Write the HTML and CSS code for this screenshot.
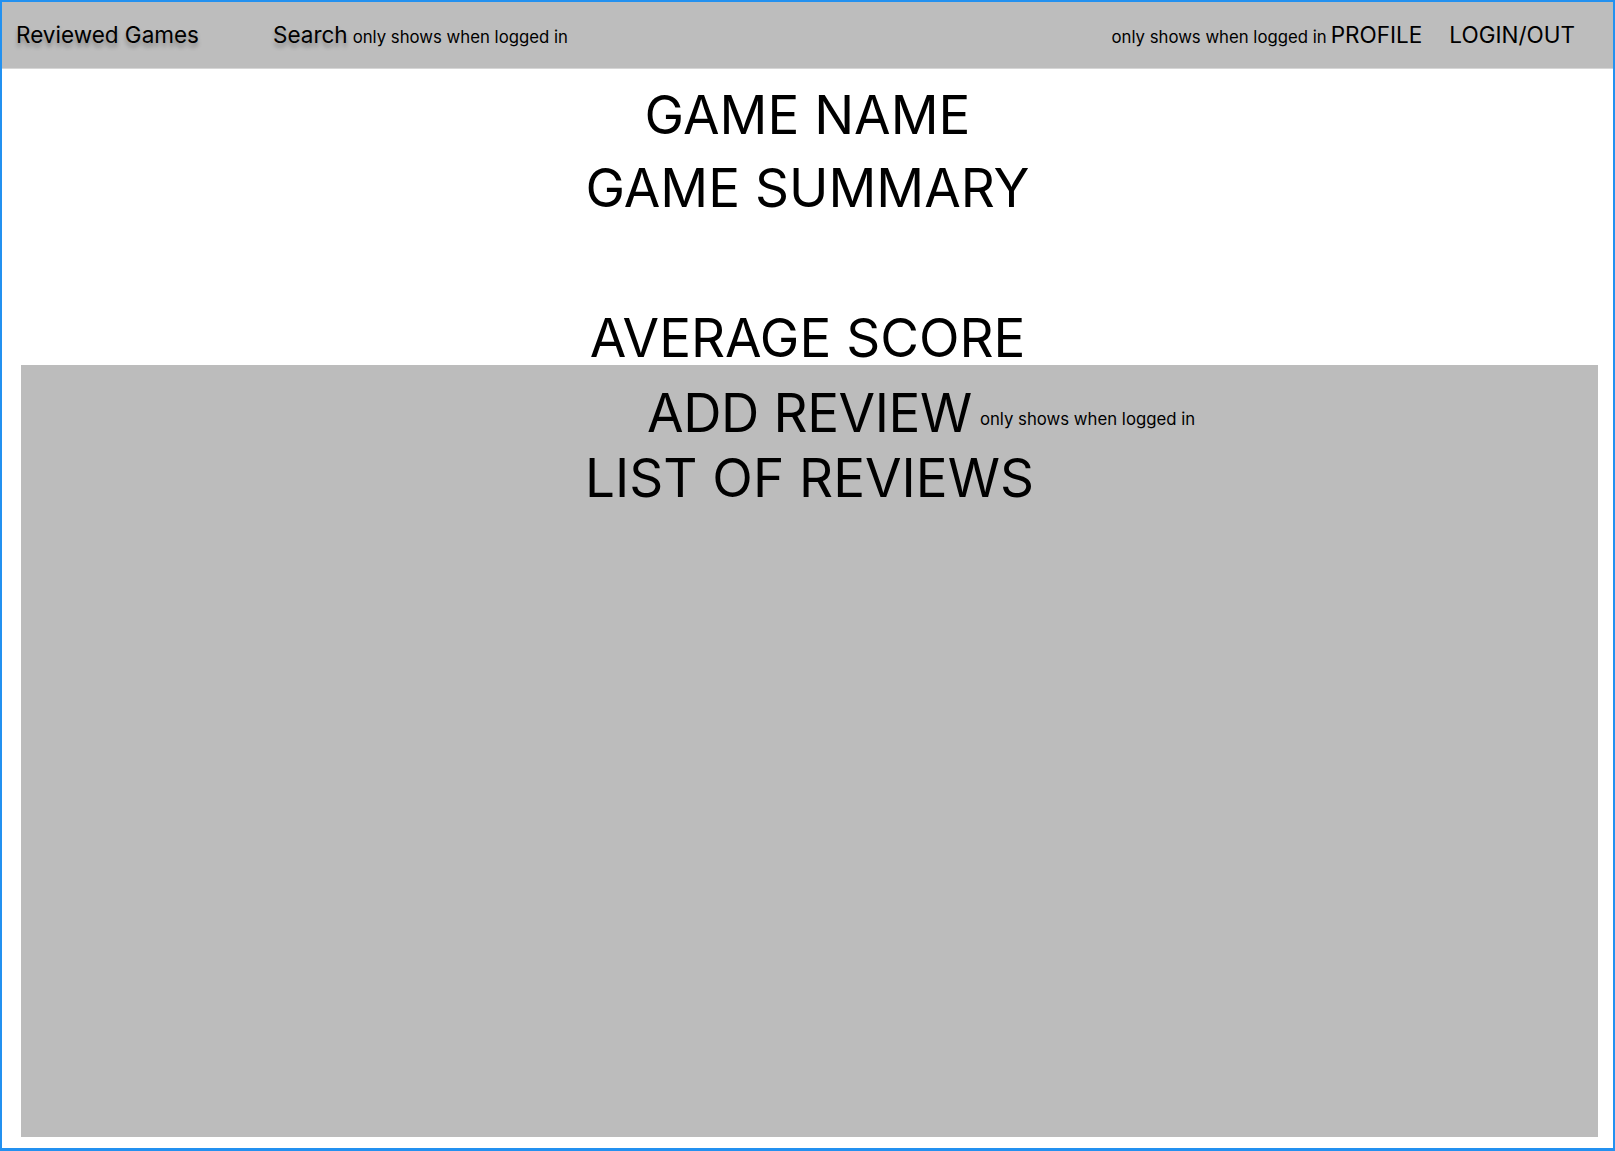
FILE: index.html
```html
<!DOCTYPE html>
<html lang="en">
<head>
<meta charset="utf-8">
<title>Reviewed Games</title>
<link rel="stylesheet" href="styles.css">
</head>
<body>
<div class="frame">
  <header class="topbar">
    <div class="topbar-left">
      <span class="brand">Reviewed Games</span>
      <span class="nav-item shadowed search">Search</span>
      <span class="note">only shows when logged in</span>
    </div>
    <div class="topbar-right">
      <span class="note">only shows when logged in</span>
      <span class="nav-item profile">PROFILE</span>
      <span class="nav-item login">LOGIN/OUT</span>
    </div>
  </header>
  <main class="content">
    <h1 class="heading">GAME NAME</h1>
    <h2 class="heading summary">GAME SUMMARY</h2>
    <h2 class="heading score">AVERAGE SCORE</h2>
    <section class="panel">
      <div class="add-row">
        <span class="spacer"></span>
        <h2 class="heading add">ADD REVIEW</h2>
        <span class="note add-note">only shows when logged in</span>
      </div>
      <h2 class="heading list">LIST OF REVIEWS</h2>
    </section>
  </main>
</div>
</body>
</html>
```
FILE: styles.css
```css
html, body {
  margin: 0;
  padding: 0;
  background: #ffffff;
}
body {
  font-family: Inter, "Noto Sans", "Liberation Sans", sans-serif;
  color: #000000;
}
.frame {
  box-sizing: border-box;
  width: 1615px;
  height: 1151px;
  border: 2px solid #2391f0;
  border-bottom-width: 3px;
  display: flex;
  flex-direction: column;
  background: #ffffff;
}
.topbar {
  box-sizing: border-box;
  height: 67px;
  flex: none;
  background: #bdbdbd;
  border-bottom: 1px solid #d6d6d6;
  display: flex;
  align-items: center;
  justify-content: space-between;
  padding: 0 38px 2px 14px;
}
.topbar-left, .topbar-right {
  display: flex;
  align-items: baseline;
}
.brand, .nav-item {
  font-size: 22.5px;
  line-height: 27px;
}
.brand, .shadowed {
  text-shadow: 0 4px 4px rgba(0, 0, 0, 0.3);
}
.search {
  margin-left: 74px;
  margin-right: 5px;
}
.note {
  font-size: 16.75px;
  line-height: 21px;
}
.profile {
  margin-left: 4px;
}
.login {
  margin-left: 27px;
}
.content {
  flex: 1;
  display: flex;
  flex-direction: column;
  padding-top: 19px;
}
.heading {
  margin: 0;
  font-size: 53px;
  font-weight: 400;
  line-height: 54px;
  text-align: center;
}
.summary {
  margin-top: 19px;
}
.score {
  margin-top: 96px;
}
.panel {
  flex: 1;
  background: #bcbcbc;
  margin: 0 15px 11px 19px;
  padding-top: 21px;
}
.add-row {
  display: grid;
  grid-template-columns: 1fr auto 1fr;
  align-items: center;
}
.add {
  letter-spacing: -0.4px;
}
.add-note {
  margin-left: 8px;
  padding-top: 12px;
}
.list {
  margin-top: 11px;
}
```
